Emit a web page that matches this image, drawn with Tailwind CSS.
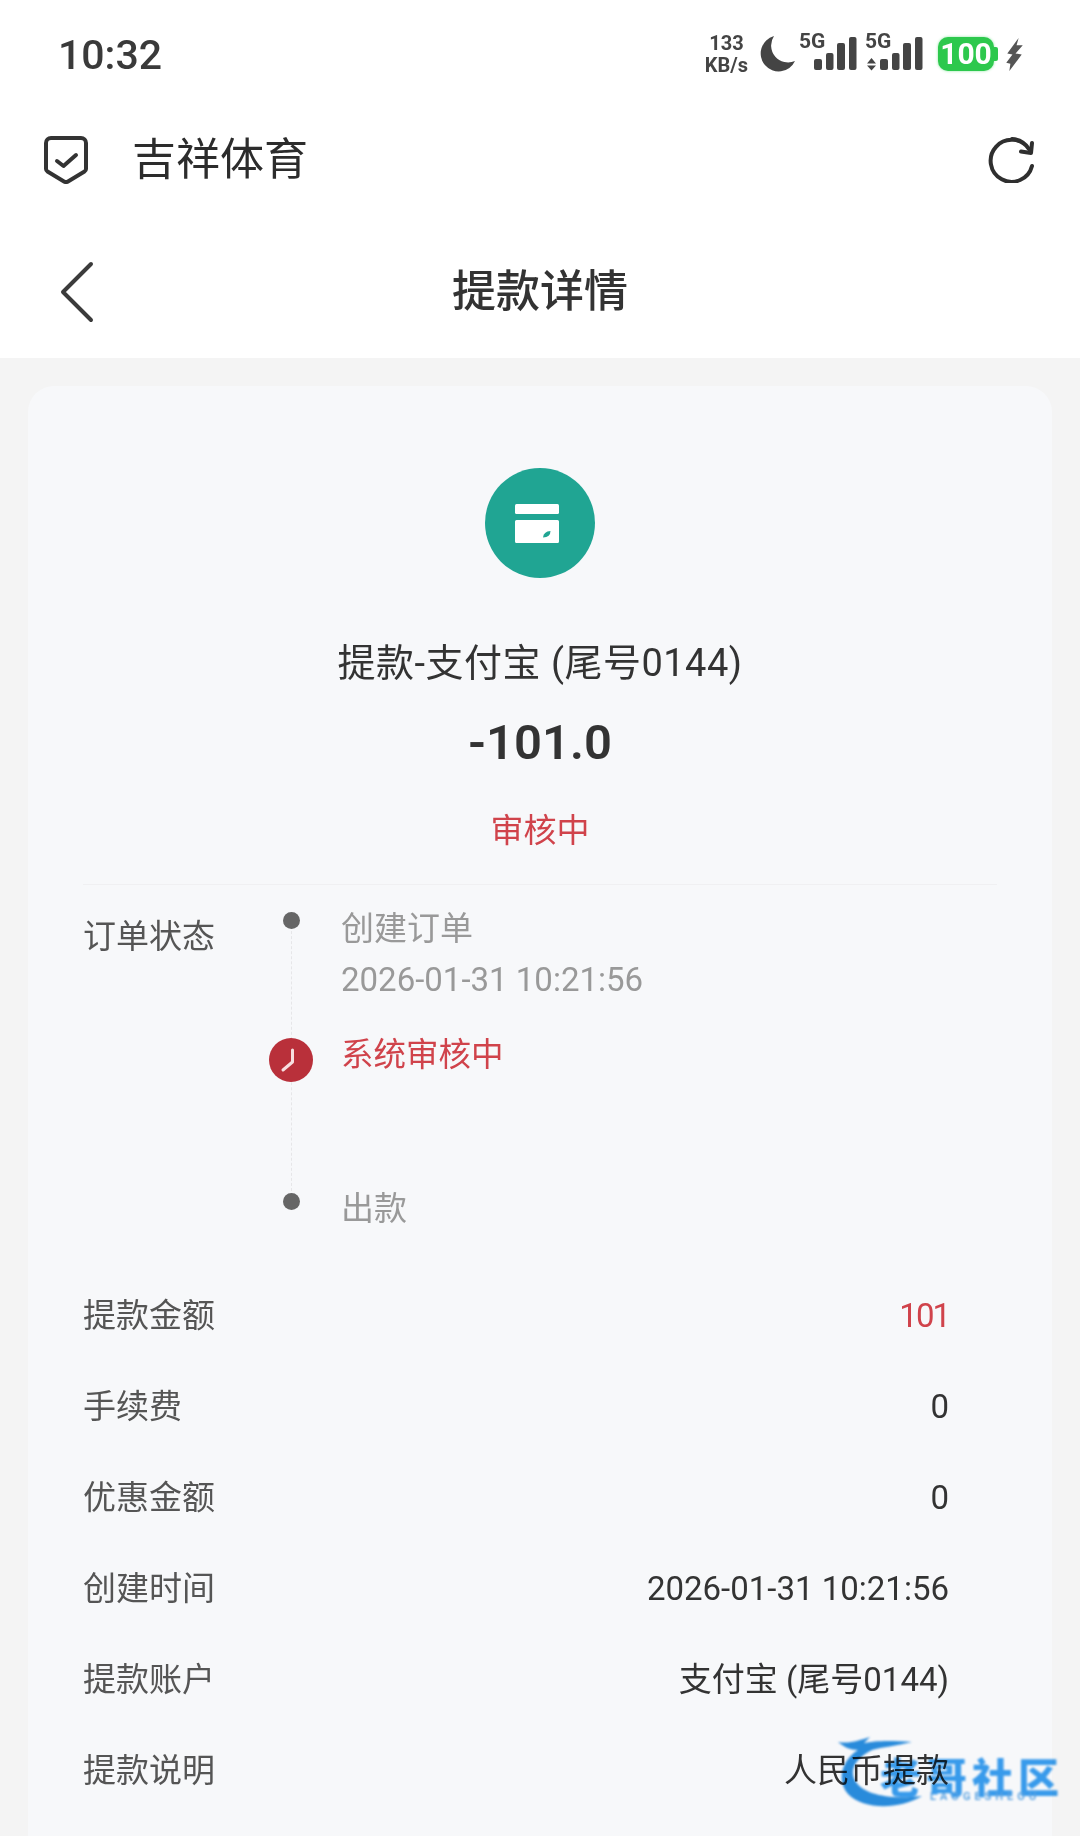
<!DOCTYPE html>
<html lang="zh-CN">
<head>
  <meta charset="UTF-8">
  <meta name="viewport" content="width=device-width, initial-scale=1.0">
  <title>提款详情</title>
  <script src="https://cdn.jsdelivr.net/npm/@tailwindcss/browser@4"></script>
</head>
<body class="relative w-[1080px] h-[1836px] overflow-hidden bg-[#f4f4f4] font-['Roboto','Noto_Sans_CJK_SC',sans-serif] text-[#333]">
  <!-- Status bar + header -->
  <header class="bg-white h-[358px] flex flex-col">
    <div class="h-[108px] flex items-center pl-[58px] pr-[57px] justify-between">
      <span class="text-[41px] font-medium text-[#3a3a3a] leading-none mt-[2px]">10:32</span>
      <div class="flex items-center">
        <div class="flex flex-col items-center font-bold text-[#444] text-[20px] leading-[22px] mr-[11px]">
          <span>133</span>
          <span>KB/s</span>
        </div>
        <svg class="w-[36px] h-[36px] mr-[4px]" viewBox="0 0 36 36"><path fill="#444" d="M15 0A18 18 0 1 0 36 25A17 17 0 0 1 15 0Z"/></svg>
        <svg class="w-[60px] h-[40px] overflow-visible" viewBox="0 0 60 40">
          <text x="0" y="14" font-size="21" font-weight="700" fill="#444" font-family="Roboto">5G</text>
          <rect x="15" y="25" width="8" height="11" rx="2" fill="#444"/>
          <rect x="27" y="19" width="7.500" height="17" rx="2" fill="#444"/>
          <rect x="38" y="9" width="8" height="27" rx="2" fill="#444"/>
          <rect x="50" y="3" width="7.500" height="33" rx="2" fill="#444"/>
        </svg>
        <svg class="w-[60px] h-[40px] ml-[6px] overflow-visible" viewBox="0 0 60 40">
          <text x="0" y="14" font-size="21" font-weight="700" fill="#444" font-family="Roboto">5G</text>
          <path d="M2 29.500L6.500 24L11 29.500ZM2 31.500L11 31.500L6.500 36.500Z" fill="#444"/>
          <rect x="15" y="25" width="8" height="11" rx="2" fill="#444"/>
          <rect x="27" y="19" width="7.500" height="17" rx="2" fill="#444"/>
          <rect x="38" y="9" width="8" height="27" rx="2" fill="#444"/>
          <rect x="50" y="3" width="7.500" height="33" rx="2" fill="#444"/>
        </svg>
        <div class="ml-[13px] w-[56px] h-[34px] rounded-[10px] bg-[#2dc84d] flex items-center justify-center text-white text-[30px] font-bold leading-none shadow-[0_0_3px_#8fe6a3]">100</div>
        <div class="w-[4px] h-[14px] bg-[#2dc84d] rounded-r-[2px]"></div>
        <svg class="w-[17px] h-[33px] ml-[8px]" viewBox="0 0 16 32"><path fill="#555" d="M12 0L1 15L6 16L0 24L4 25L3 32L15 16L9 15L16 7L10 7Z"/></svg>
      </div>
    </div>

    <div class="h-[104px] flex items-center pl-[44px] pr-[46px]">
      <svg class="w-[44px] h-[48px]" viewBox="0 0 44 48" fill="none" stroke="#333" stroke-width="4" stroke-linejoin="round" stroke-linecap="round">
        <path d="M7 2H37A5 5 0 0 1 42 7V33A3 3 0 0 1 40.500 35.500L24 45.500A4 4 0 0 1 20 45.500L3.500 35.500A3 3 0 0 1 2 33V7A5 5 0 0 1 7 2Z"/>
        <path d="M13 25L19.500 30L32 19"/>
      </svg>
      <span class="ml-[44px] text-[44px] leading-none text-[#2c2c2c]">吉祥体育</span>
      <svg class="ml-auto w-[46px] h-[46px]" viewBox="0 0 46 46" fill="none" stroke="#2f2f2f" stroke-width="4" stroke-linecap="round" stroke-linejoin="round">
        <path d="M44 29A21 21 0 1 1 41 12C38 7.500 33 2.500 24 2"/>
        <path d="M44 6L43 16L33 14.500"/>
      </svg>
    </div>

    <div class="relative h-[146px] flex items-center justify-center">
      <svg class="absolute left-[60px] top-[49px] w-[34px] h-[62px]" viewBox="0 0 34 62" fill="none" stroke="#3b3b3b" stroke-width="4" stroke-linecap="round" stroke-linejoin="round"><path d="M31 3L3 31L31 59"/></svg>
      <h1 class="text-[44px] font-medium leading-none text-[#333] mt-[13px]">提款详情</h1>
    </div>
  </header>

  <!-- Card -->
  <main class="mx-[28px] mt-[28px] h-[1500px] rounded-t-[26px] bg-[#f7f8fa] px-[55px] pt-[82px]">
    <div class="flex flex-col items-center">
      <div class="w-[110px] h-[110px] rounded-full bg-[#20a593] flex items-center justify-center">
        <svg class="w-[44px] h-[39px] mr-[6px]" viewBox="0 0 44 39"><rect x="0" y="0" width="44" height="10" rx="1.500" fill="#fff"/><path fill="#fff" d="M1.500 16H42.500A1.500 1.500 0 0 1 44 17.500V37.500A1.500 1.500 0 0 1 42.500 39H1.500A1.500 1.500 0 0 1 0 37.500V17.500A1.500 1.500 0 0 1 1.500 16Z"/><path fill="#20a593" d="M28 33.500Q28.500 27.500 35.500 27Q35.500 33 28 33.500Z"/></svg>
      </div>
      <p class="mt-[63px] text-[38px] leading-[44px] text-[#333] tracking-[0.500px]">提款-支付宝 (尾号0144)</p>
      <p class="mt-[28px] text-[49px] leading-[60px] font-semibold text-[#333]">-101.0</p>
      <p class="mt-[38px] text-[33px] leading-[40px] text-[#d0434b]">审核中</p>
    </div>

    <div class="mt-[33px] border-t border-[#f0f0f2] pt-[24px] flex">
      <span class="w-[208px] text-[33px] leading-[40px] text-[#555] shrink-0 pt-[8px]">订单状态</span>
      <div class="relative flex flex-col w-[600px]">
        <div class="absolute left-0 top-[12px] h-[270px] border-l border-dashed border-[#e6e6e8]"></div>

        <div class="relative h-[121px] pl-[50px] text-[33px] text-[#999]">
          <span class="absolute -left-[8px] top-[3px] w-[17px] h-[17px] rounded-full bg-[#666]"></span>
          <p class="h-[41px] leading-[40px]">创建订单</p>
          <p class="leading-[60px]">2026-01-31 10:21:56</p>
        </div>

        <div class="relative h-[159px] pl-[50px] text-[32.500px] text-[#d0434b] leading-[40px] pt-[5px]">
          <svg class="absolute -left-[22px] top-[8px] w-[44px] h-[44px]" viewBox="0 0 44 44"><circle cx="22" cy="22" r="22" fill="#b9303a"/><path d="M23.500 12V24L14 32" fill="none" stroke="#f7dfe0" stroke-width="3" stroke-linecap="round" stroke-linejoin="round"/></svg>
          <p>系统审核中</p>
        </div>

        <div class="relative h-[41px] pl-[50px] text-[33px] text-[#999] leading-[40px]">
          <span class="absolute -left-[8px] top-[4px] w-[17px] h-[17px] rounded-full bg-[#666]"></span>
          <p>出款</p>
        </div>
      </div>
    </div>

    <dl class="mt-[40px] pr-[48px] text-[33px]">
      <div class="h-[91px] flex items-center justify-between"><dt class="text-[#555]">提款金额</dt><dd class="text-[#d0434b] tracking-[-2px]">101</dd></div>
      <div class="h-[91px] flex items-center justify-between"><dt class="text-[#555]">手续费</dt><dd class="text-[#333]">0</dd></div>
      <div class="h-[91px] flex items-center justify-between"><dt class="text-[#555]">优惠金额</dt><dd class="text-[#333]">0</dd></div>
      <div class="h-[91px] flex items-center justify-between"><dt class="text-[#555]">创建时间</dt><dd class="text-[#333]">2026-01-31 10:21:56</dd></div>
      <div class="h-[91px] flex items-center justify-between"><dt class="text-[#555]">提款账户</dt><dd class="text-[#333]">支付宝 (尾号0144)</dd></div>
      <div class="h-[91px] flex items-center justify-between"><dt class="text-[#555]">提款说明</dt><dd class="text-[#333]">人民币提款</dd></div>
    </dl>
  </main>

  <!-- Watermark -->
  <div class="absolute left-[836px] top-[1732px] w-[226px] h-[78px] mix-blend-multiply blur-[1px]">
    <span class="absolute left-[44px] top-[24px] text-[41px] leading-[46px] tracking-[5px] font-black text-[#3a9ff0] whitespace-nowrap">老哥社区</span>
    <svg class="absolute left-0 top-0 w-[110px] h-[78px]" viewBox="0 0 110 78">
      <path fill="#2a8fe0" d="M2 10C14 12 24 8 34 5L28 11C38 9 52 8 76 10C60 14 46 15 36 18C20 26 12 38 20 50C28 62 52 68 86 64C62 78 28 78 12 62C0 48 6 28 22 18C14 18 8 15 2 10Z"/>
    </svg>
    <span class="absolute left-[94px] top-[58px] text-[11px] leading-[14px] tracking-[4px] font-semibold text-[#5aa6e6] whitespace-nowrap">LAOGESHEOU</span>
  </div>
</body>
</html>
